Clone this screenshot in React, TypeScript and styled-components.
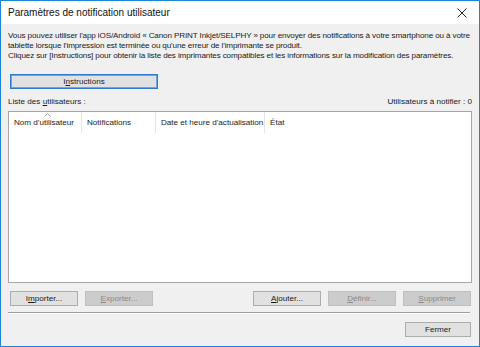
import React from "react";
import styled, { createGlobalStyle } from "styled-components";

const Global = createGlobalStyle`
  html, body { margin: 0; padding: 0; background: #ffffff; }
  * { box-sizing: border-box; }
`;

const Window = styled.div`
  width: 480px;
  height: 347px;
  border: 1px solid #1b86d8;
  display: flex;
  flex-direction: column;
  font-family: "Liberation Sans", Arial, sans-serif;
  font-size: 8.1px;
  color: #1a1a1a;
  background: #f0f0f0;
  overflow: hidden;
`;

const TitleBar = styled.div`
  height: 23px;
  background: #ffffff;
  display: flex;
  align-items: center;
  justify-content: space-between;
  padding: 0 12px 0 7px;
  font-size: 10px;
  color: #111;
`;

const Body = styled.div`
  flex: 1;
  display: flex;
  flex-direction: column;
  padding: 7px 7px 0 7px;
`;

const Description = styled.div`
  line-height: 10px;
  white-space: nowrap;
  letter-spacing: -0.13px;
`;

const Btn = styled.button<{ $w: number; $focus?: boolean }>`
  width: ${(p) => p.$w}px;
  height: 15px;
  padding: 0;
  margin: 0;
  font-family: inherit;
  font-size: 8.1px;
  line-height: 13px;
  color: #1a1a1a;
  background: #e1e1e1;
  border: 1px solid ${(p) => (p.$focus ? "#2c7bd0" : "#adadad")};
  box-shadow: ${(p) => (p.$focus ? "inset 0 0 0 1px #6aa6e0" : "none")};
  &:disabled {
    background: #cccccc;
    border-color: #bfbfbf;
    color: #8a8a8a;
  }
`;

const U = styled.span`
  text-decoration: underline;
`;

const InstrRow = styled.div`
  margin-top: 13px;
  padding-left: 2px;
`;

const LabelRow = styled.div`
  margin-top: 8px;
  height: 10px;
  line-height: 10px;
  display: flex;
  justify-content: space-between;
`;

const ListBox = styled.div`
  margin-top: 4px;
  height: 172px;
  background: #ffffff;
  border: 1px solid #a6a6a6;
`;

const Header = styled.div`
  display: grid;
  grid-template-columns: 73px 74px 109px 1fr;
  height: 21px;
`;

const HeadCell = styled.div<{ $last?: boolean }>`
  position: relative;
  display: flex;
  align-items: center;
  padding-left: 5px;
  border-right: ${(p) => (p.$last ? "none" : "1px solid #e5e5e5")};
  white-space: nowrap;
  overflow: hidden;
`;

const SortArrow = styled.svg`
  position: absolute;
  top: 1px;
  left: 35px;
`;

const ButtonRow = styled.div`
  margin-top: 8px;
  display: flex;
  padding: 0 1px 0 2px;
`;

const Group = styled.div<{ $gap: number }>`
  display: flex;
  gap: ${(p) => p.$gap}px;
`;

const Spacer = styled.div`
  flex: 1;
`;

const Separator = styled.div`
  margin-top: 6px;
  margin-right: 2px;
  height: 2px;
  border-top: 1px solid #a0a0a0;
  border-bottom: 1px solid #ffffff;
`;

const FooterRow = styled.div`
  margin-top: 8px;
  display: flex;
  justify-content: flex-end;
  padding-right: 1px;
`;

export default function App() {
  return (
    <>
      <Global />
      <Window>
        <TitleBar>
          <span>Paramètres de notification utilisateur</span>
          <svg width="10" height="10" viewBox="0 0 10 10">
            <path d="M0.5 0.5 L9.5 9.5 M9.5 0.5 L0.5 9.5" stroke="#222" strokeWidth="1" />
          </svg>
        </TitleBar>
        <Body>
          <Description>
            Vous pouvez utiliser l'app iOS/Android « Canon PRINT Inkjet/SELPHY » pour envoyer des notifications à votre smartphone ou à votre
            <br />
            tablette lorsque l'impression est terminée ou qu'une erreur de l'imprimante se produit.
            <br />
            Cliquez sur [Instructions] pour obtenir la liste des imprimantes compatibles et les informations sur la modification des paramètres.
          </Description>
          <InstrRow>
            <Btn $w={148} $focus>
              I<U>n</U>structions
            </Btn>
          </InstrRow>
          <LabelRow>
            <span>
              Liste des <U>u</U>tilisateurs :
            </span>
            <span>Utilisateurs à notifier : 0</span>
          </LabelRow>
          <ListBox>
            <Header>
              <HeadCell>
                <SortArrow width="7" height="4" viewBox="0 0 7 4">
                  <path d="M0.5 3.5 L3.5 0.5 L6.5 3.5" stroke="#9a9a9a" strokeWidth="1" fill="none" />
                </SortArrow>
                Nom d'utilisateur
              </HeadCell>
              <HeadCell>Notifications</HeadCell>
              <HeadCell>Date et heure d'actualisation</HeadCell>
              <HeadCell $last>État</HeadCell>
            </Header>
          </ListBox>
          <ButtonRow>
            <Group $gap={7}>
              <Btn $w={68}>
                I<U>m</U>porter...
              </Btn>
              <Btn $w={68} disabled>
                <U>E</U>xporter...
              </Btn>
            </Group>
            <Spacer />
            <Group $gap={7}>
              <Btn $w={68}>
                <U>A</U>jouter...
              </Btn>
              <Btn $w={68} disabled>
                <U>D</U>éfinir...
              </Btn>
              <Btn $w={68} disabled>
                <U>S</U>upprimer
              </Btn>
            </Group>
          </ButtonRow>
          <Separator />
          <FooterRow>
            <Btn $w={66}>Fermer</Btn>
          </FooterRow>
        </Body>
      </Window>
    </>
  );
}
